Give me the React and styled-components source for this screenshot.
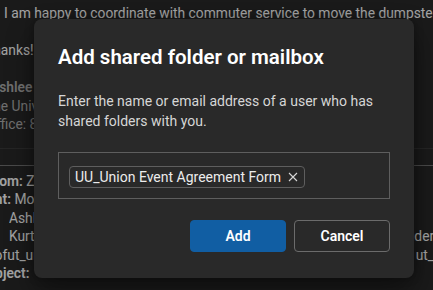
import React from 'react';
import styled, { createGlobalStyle } from 'styled-components';

const COLORS = {
  page: '#262626',
  dialog: '#292929',
  stroke: '#5e5e5e',
  textHi: '#ffffff',
  textBody: '#d6d6d6',
  brand: '#115ea3',
};

const FONT = `"Segoe UI", Roboto, "Liberation Sans", sans-serif`;

const GlobalStyle = createGlobalStyle`
  html, body { margin: 0; padding: 0; background: #1b1b1b; }
  body { width: 433px; height: 290px; overflow: hidden; font-family: ${FONT}; }
`;

const Screen = styled.div`
  position: relative;
  width: 433px;
  height: 290px;
  overflow: hidden;
  background: ${COLORS.page};
`;

const ReadingPane = styled.div`
  display: flex;
  flex-direction: column;
  font-size: 13.8px;
  color: #eaeaea;
`;

const Line = styled.div`
  height: 18.5px;
  line-height: 18.5px;
  margin-left: ${p => p.$indent || 0}px;
  white-space: nowrap;
  font-weight: ${p => (p.$bold ? 600 : 400)};
  color: ${p => (p.$muted ? '#a0a0a0' : 'inherit')};
`;

const Gap = styled.div`
  height: ${p => p.$h}px;
  flex: none;
`;

const Divider = styled.div`
  height: 1px;
  flex: none;
  background: ${p => (p.$strong ? '#6a6a6a' : '#363636')};
`;

const HeaderRow = styled.div`
  display: flex;
  height: 18.5px;
  line-height: 18.5px;
  white-space: nowrap;
  b { font-weight: 600; }
`;

const HeaderLeft = styled.div`
  width: ${p => 402 - (p.$indent || 0)}px;
  flex: none;
  overflow: hidden;
  margin-left: ${p => p.$indent || 0}px;
`;

const HeaderRight = styled.div`
  flex: none;
`;

const Overlay = styled.div`
  position: absolute;
  inset: 0;
  background: rgba(0, 0, 0, 0.3);
`;

const Dialog = styled.div`
  position: absolute;
  left: 34px;
  top: 19px;
  width: 380px;
  box-sizing: border-box;
  padding: 24px 24px 26px;
  background: ${COLORS.dialog};
  border-radius: 8px;
  box-shadow: 0 0 8px rgba(0,0,0,0.35), 0 14px 28px rgba(0,0,0,0.4);
  display: flex;
  flex-direction: column;
`;

const Title = styled.h2`
  margin: 0;
  font-size: 20.5px;
  line-height: 28px;
  font-weight: 600;
  color: ${COLORS.textHi};
`;

const Body = styled.p`
  margin: 20px 0 0;
  font-size: 14px;
  line-height: 20px;
  color: ${COLORS.textBody};
`;

const Field = styled.div`
  margin-top: 21px;
  border: 1px solid ${COLORS.stroke};
  padding: 13px 10px 10px;
  display: flex;
  align-items: center;
`;

const Chip = styled.div`
  display: inline-flex;
  align-items: center;
  gap: 7px;
  height: 22px;
  box-sizing: border-box;
  padding: 0 6px 0 5px;
  border: 1px solid ${COLORS.stroke};
  border-radius: 4px;
  font-size: 14px;
  color: #ececec;
  white-space: nowrap;
`;

const Actions = styled.div`
  margin-top: 21px;
  display: flex;
  justify-content: flex-end;
  gap: 8px;
`;

const Button = styled.button`
  width: 96px;
  height: 32px;
  border-radius: 4px;
  font-family: ${FONT};
  font-size: 14px;
  font-weight: 600;
  color: #fff;
  cursor: pointer;
  background: ${p => (p.$primary ? COLORS.brand : COLORS.dialog)};
  border: 1px solid ${p => (p.$primary ? COLORS.brand : '#6b6b6b')};
`;

const Dismiss = () => (
  <svg width="10" height="10" viewBox="0 0 10 10">
    <path d="M1 1 L9 9 M9 1 L1 9" stroke="#d8d8d8" strokeWidth="1.1" fill="none" />
  </svg>
);

export default function App() {
  return (
    <Screen>
      <GlobalStyle />
      <ReadingPane>
        <Gap $h={4} />
        <Line $indent={4}>I am happy to coordinate with commuter service to move the dumpster for the event.</Line>
        <Gap $h={18} />
        <Line $indent={-15}>Thanks!</Line>
        <Gap $h={19} />
        <Line $muted $bold $indent={-10}>Ashlee Brown</Line>
        <Line $muted $indent={-15}>The University of Utah</Line>
        <Line $muted $indent={-13}>Office: 801-581-5888</Line>
        <Gap $h={14} />
        <Divider />
        <Gap $h={16} />
        <Divider $strong />
        <Gap $h={6} />
        <HeaderRow><HeaderLeft $indent={-13}><b>From:</b> Zachary Miller</HeaderLeft></HeaderRow>
        <HeaderRow><HeaderLeft $indent={-21}><b>Sent:</b> Monday, March 4</HeaderLeft></HeaderRow>
        <HeaderRow><HeaderLeft $indent={9}>Ashlee Brown</HeaderLeft></HeaderRow>
        <HeaderRow><HeaderLeft $indent={9}>Kurt Ingram</HeaderLeft><HeaderRight>Alderco</HeaderRight></HeaderRow>
        <HeaderRow><HeaderLeft $indent={-13}>uofut_union@utah.edu</HeaderLeft><HeaderRight>&nbsp;&nbsp;&nbsp;&nbsp;ut_union</HeaderRight></HeaderRow>
        <HeaderRow><HeaderLeft $indent={-21}><b>Subject:</b></HeaderLeft></HeaderRow>
      </ReadingPane>
      <Overlay />
      <Dialog role="dialog">
        <Title>Add shared folder or mailbox</Title>
        <Body>Enter the name or email address of a user who has shared folders with you.</Body>
        <Field>
          <Chip>UU_Union Event Agreement Form <Dismiss /></Chip>
        </Field>
        <Actions>
          <Button $primary>Add</Button>
          <Button>Cancel</Button>
        </Actions>
      </Dialog>
    </Screen>
  );
}
